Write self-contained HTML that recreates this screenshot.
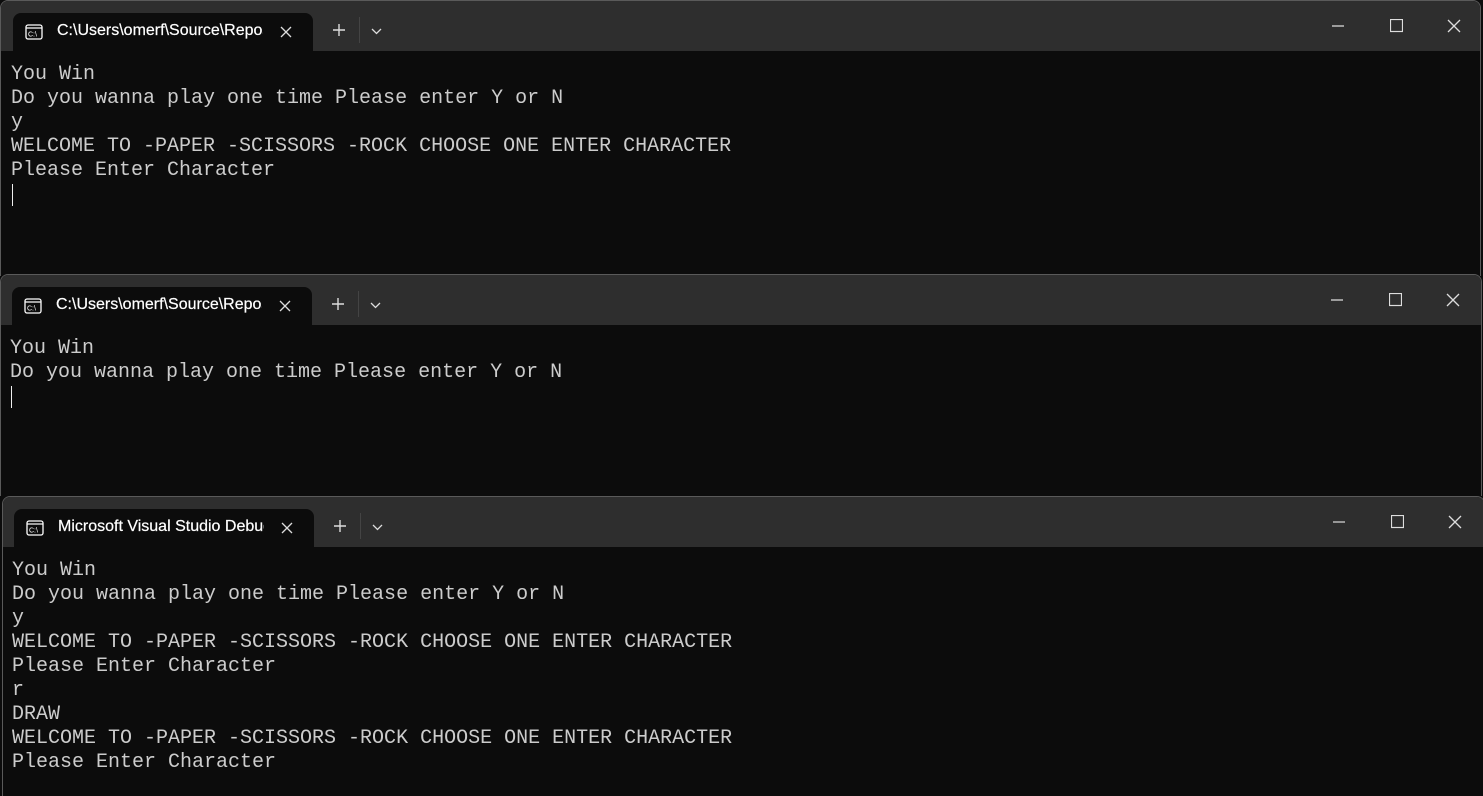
<!DOCTYPE html>
<html><head><meta charset="utf-8"><style>
*{margin:0;padding:0;box-sizing:border-box}
body{width:1483px;height:794px;background:#0c0c0c;overflow:hidden;position:relative;font-family:"Liberation Sans",sans-serif}
.win{position:absolute;background:#0c0c0c;border:1px solid #5a5a5a;border-bottom:none;border-radius:8px 8px 0 0;overflow:hidden}
.bar{position:absolute;left:0;right:0;top:0;height:50px;background:#2e2e2e}
.tab{position:absolute;top:12px;height:38px;width:300px;background:#0c0c0c;border-radius:8px 8px 0 0}
.tab .t{position:absolute;left:44px;top:9px;font-size:16px;color:#fff;width:206px;overflow:hidden;white-space:nowrap;-webkit-text-stroke:0.2px #fff}
.tab svg.ic{position:absolute;left:12px;top:11px}
.tab svg.x{position:absolute;left:267px;top:13px}
.plus{position:absolute;top:22px}
.div{position:absolute;top:16px;width:1px;height:26px;background:#444}
.chev{position:absolute;top:27px}
.ctl{position:absolute;top:18px}
.txt{position:absolute;font-family:"Liberation Mono",monospace;font-size:20px;line-height:24px;color:#cccccc;white-space:pre}
.cur{position:absolute;width:1px;height:22px;background:#eee}
</style></head><body>

<!-- window 1 -->
<div class="win" style="left:0;top:0;width:1481px;height:276px">
 <div class="bar"></div>
 <div class="tab" style="left:12px">
  <svg class="ic" width="18" height="16" viewBox="0 0 18 16"><rect x="1" y="1" width="16" height="14" rx="2" fill="none" stroke="#fff" stroke-width="1.3"/><line x1="1" y1="4" x2="17" y2="4" stroke="#fff" stroke-width="1.2"/><text x="3" y="12.5" font-size="7" fill="#fff" font-family="Liberation Sans">C:\</text></svg>
  <div class="t">C:\Users\omerf\Source\Repos</div>
  <svg class="x" width="12" height="12"><path d="M1 1L11 11M11 1L1 11" stroke="#ddd" stroke-width="1.3"/></svg>
 </div>
 <svg class="plus" style="left:331px" width="14" height="14"><path d="M7 1V13M1 7H13" stroke="#ddd" stroke-width="1.4"/></svg>
 <div class="div" style="left:358px"></div>
 <svg class="chev" style="left:370px" width="11" height="7"><path d="M1 1L5.5 5.5L10 1" fill="none" stroke="#ddd" stroke-width="1.3"/></svg>
 <svg class="ctl" style="left:1331px" width="12" height="14"><path d="M0 7H12" stroke="#ddd" stroke-width="1.2"/></svg>
 <svg class="ctl" style="left:1389px" width="13" height="14"><rect x="0.5" y="0.5" width="12" height="12" fill="none" stroke="#ddd" stroke-width="1.2"/></svg>
 <svg class="ctl" style="left:1446px" width="14" height="14"><path d="M1 1L13 13M13 1L1 13" stroke="#ddd" stroke-width="1.3"/></svg>
 <div class="txt" style="left:10px;top:62px">You Win
Do you wanna play one time Please enter Y or N
y
WELCOME TO -PAPER -SCISSORS -ROCK CHOOSE ONE ENTER CHARACTER
Please Enter Character</div>
 <div class="cur" style="left:11px;top:183px"></div>
</div>

<!-- window 2 -->
<div class="win" style="left:0;top:274px;width:1482px;height:222px">
 <div class="bar"></div>
 <div class="tab" style="left:11px">
  <svg class="ic" width="18" height="16" viewBox="0 0 18 16"><rect x="1" y="1" width="16" height="14" rx="2" fill="none" stroke="#fff" stroke-width="1.3"/><line x1="1" y1="4" x2="17" y2="4" stroke="#fff" stroke-width="1.2"/><text x="3" y="12.5" font-size="7" fill="#fff" font-family="Liberation Sans">C:\</text></svg>
  <div class="t">C:\Users\omerf\Source\Repos</div>
  <svg class="x" width="12" height="12"><path d="M1 1L11 11M11 1L1 11" stroke="#ddd" stroke-width="1.3"/></svg>
 </div>
 <svg class="plus" style="left:330px" width="14" height="14"><path d="M7 1V13M1 7H13" stroke="#ddd" stroke-width="1.4"/></svg>
 <div class="div" style="left:357px"></div>
 <svg class="chev" style="left:369px" width="11" height="7"><path d="M1 1L5.5 5.5L10 1" fill="none" stroke="#ddd" stroke-width="1.3"/></svg>
 <svg class="ctl" style="left:1330px" width="12" height="14"><path d="M0 7H12" stroke="#ddd" stroke-width="1.2"/></svg>
 <svg class="ctl" style="left:1388px" width="13" height="14"><rect x="0.5" y="0.5" width="12" height="12" fill="none" stroke="#ddd" stroke-width="1.2"/></svg>
 <svg class="ctl" style="left:1445px" width="14" height="14"><path d="M1 1L13 13M13 1L1 13" stroke="#ddd" stroke-width="1.3"/></svg>
 <div class="txt" style="left:9px;top:62px">You Win
Do you wanna play one time Please enter Y or N</div>
 <div class="cur" style="left:10px;top:111px"></div>
</div>

<!-- window 3 -->
<div class="win" style="left:2px;top:496px;width:1483px;height:300px">
 <div class="bar"></div>
 <div class="tab" style="left:11px">
  <svg class="ic" width="18" height="16" viewBox="0 0 18 16"><rect x="1" y="1" width="16" height="14" rx="2" fill="none" stroke="#fff" stroke-width="1.3"/><line x1="1" y1="4" x2="17" y2="4" stroke="#fff" stroke-width="1.2"/><text x="3" y="12.5" font-size="7" fill="#fff" font-family="Liberation Sans">C:\</text></svg>
  <div class="t">Microsoft Visual Studio Debug</div>
  <svg class="x" width="12" height="12"><path d="M1 1L11 11M11 1L1 11" stroke="#ddd" stroke-width="1.3"/></svg>
 </div>
 <svg class="plus" style="left:330px" width="14" height="14"><path d="M7 1V13M1 7H13" stroke="#ddd" stroke-width="1.4"/></svg>
 <div class="div" style="left:357px"></div>
 <svg class="chev" style="left:369px" width="11" height="7"><path d="M1 1L5.5 5.5L10 1" fill="none" stroke="#ddd" stroke-width="1.3"/></svg>
 <svg class="ctl" style="left:1330px" width="12" height="14"><path d="M0 7H12" stroke="#ddd" stroke-width="1.2"/></svg>
 <svg class="ctl" style="left:1388px" width="13" height="14"><rect x="0.5" y="0.5" width="12" height="12" fill="none" stroke="#ddd" stroke-width="1.2"/></svg>
 <svg class="ctl" style="left:1445px" width="14" height="14"><path d="M1 1L13 13M13 1L1 13" stroke="#ddd" stroke-width="1.3"/></svg>
 <div class="txt" style="left:9px;top:62px">You Win
Do you wanna play one time Please enter Y or N
y
WELCOME TO -PAPER -SCISSORS -ROCK CHOOSE ONE ENTER CHARACTER
Please Enter Character
r
DRAW
WELCOME TO -PAPER -SCISSORS -ROCK CHOOSE ONE ENTER CHARACTER
Please Enter Character</div>
</div>

</body></html>
